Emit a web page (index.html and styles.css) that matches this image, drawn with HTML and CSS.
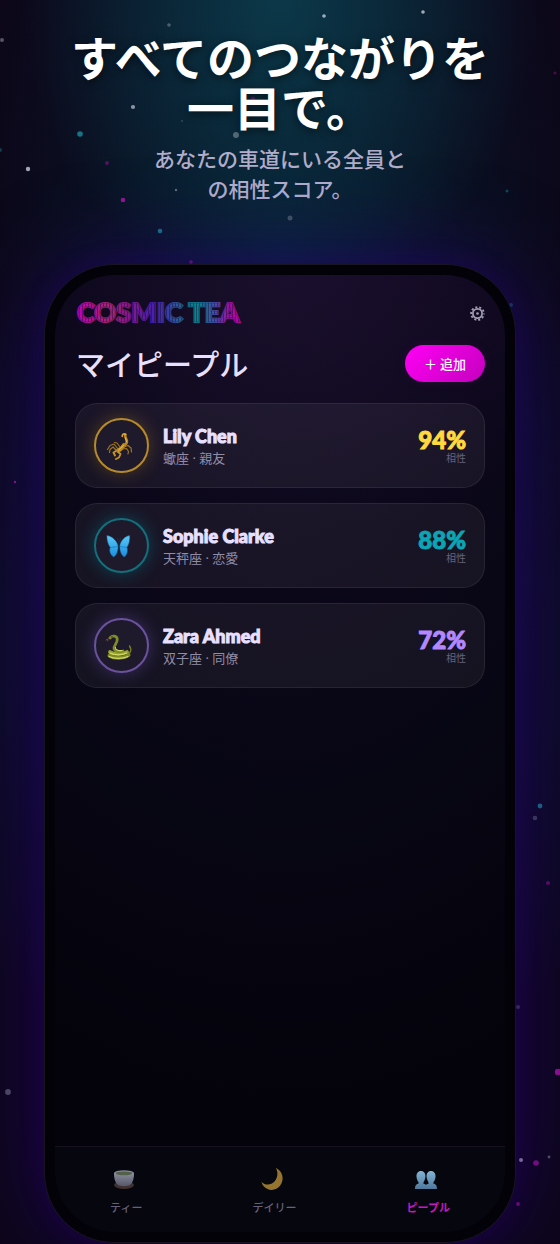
FILE: index.html
```
<!DOCTYPE html>
<html lang="ja">

<head>
    <meta charset="UTF-8" />
    <meta name="viewport" content="width=device-width, initial-scale=1.0" />
    <title>Cosmic Tea</title>
    <link rel="stylesheet" href="styles.css">
</head>

<body>

    <!-- 星空 -->
    <svg class="stars" viewBox="0 0 560 1244" preserveAspectRatio="xMidYMid slice" aria-hidden="true">
        <g fill="#dfe6f5">
            <circle cx="324" cy="16" r="1.8" opacity=".7" />
            <circle cx="423" cy="12" r="1.8" opacity=".7" />
            <circle cx="169" cy="25" r="1.8" opacity=".3" />
            <circle cx="2" cy="40" r="2" opacity=".35" />
            <circle cx="416" cy="45" r="1.5" opacity=".25" />
            <circle cx="133" cy="107" r="2.1" opacity=".6" />
            <circle cx="236" cy="135" r="3" opacity=".35" />
            <circle cx="182" cy="121" r="1" opacity=".2" />
            <circle cx="28" cy="169" r="2.2" opacity=".7" />
            <circle cx="176" cy="190" r="1.2" opacity=".4" />
            <circle cx="290" cy="218" r="2.5" opacity=".25" />
            <circle cx="535" cy="818" r="2.3" opacity=".25" />
            <circle cx="518" cy="1007" r="2" opacity=".25" />
            <circle cx="8" cy="1092" r="2.9" opacity=".32" />
            <circle cx="521" cy="1160" r="2" opacity=".65" />
            <circle cx="549" cy="1157" r="1.4" opacity=".35" />
        </g>
        <g fill="#e81ad8">
            <circle cx="555" cy="73" r="1.6" opacity=".25" />
            <circle cx="253" cy="99" r="2.4" opacity=".35" />
            <circle cx="107" cy="163" r="2" opacity=".3" />
            <circle cx="123" cy="200" r="2.3" opacity=".6" />
            <circle cx="191" cy="262" r="1.8" opacity=".5" />
            <circle cx="15" cy="482" r="1.2" opacity=".6" />
            <circle cx="548" cy="883" r="2.1" opacity=".35" />
            <circle cx="558" cy="1072" r="3.2" opacity=".6" />
            <circle cx="536" cy="1163" r="2.8" opacity=".55" />
            <circle cx="518" cy="1204" r="1.9" opacity=".5" />
        </g>
        <g fill="#1fb5c4">
            <circle cx="80" cy="134" r="2.8" opacity=".6" />
            <circle cx="0" cy="150" r="2" opacity=".3" />
            <circle cx="507" cy="191" r="1.5" opacity=".35" />
            <circle cx="160" cy="231" r="2.3" opacity=".6" />
            <circle cx="511" cy="305" r="2" opacity=".35" />
            <circle cx="540" cy="806" r="2.4" opacity=".6" />
        </g>
    </svg>

    <header class="hero">
        <h1>すべてのつながりを<br>一目で。</h1>
        <p>あなたの車道にいる全員と<br>の相性スコア。</p>
    </header>

    <div class="phone">
        <div class="screen">

            <main class="content">
                <div class="topbar">
                    <svg class="logo" viewBox="0 0 176 32" role="img" aria-label="COSMIC TEA">
                        <defs>
                            <linearGradient id="rainbow" gradientUnits="userSpaceOnUse" x1="0" y1="0" x2="168" y2="0">
                                <stop offset="0" stop-color="#bf00b5" />
                                <stop offset=".2" stop-color="#a82478" />
                                <stop offset=".32" stop-color="#8a1890" />
                                <stop offset=".48" stop-color="#4520b4" />
                                <stop offset=".6" stop-color="#2f55a0" />
                                <stop offset=".72" stop-color="#008a92" />
                                <stop offset=".84" stop-color="#4a4ab0" />
                                <stop offset=".92" stop-color="#a010a0" />
                                <stop offset="1" stop-color="#c000b0" />
                            </linearGradient>
                            <!-- 字面に入る細い縦線 -->
                            <pattern id="tube" patternUnits="userSpaceOnUse" width="3" height="32">
                                <rect x="1" width="1" height="32" fill="#140d28" opacity=".45" />
                            </pattern>
                        </defs>
                        <text class="logo-text" x="2" y="25">COSMIC TEA</text>
                        <text class="logo-lines" x="2" y="25" aria-hidden="true">COSMIC TEA</text>
                    </svg>
                    <button class="settings" type="button" aria-label="設定">
                        <svg viewBox="0 0 16 16" width="15" height="15" fill="none" stroke="currentColor">
                            <circle cx="8" cy="8" r="4.9" stroke-width="1.9" />
                            <circle cx="8" cy="8" r="6.8" stroke-width="2" stroke-dasharray="2.2 2.073" stroke-dashoffset="1.1" />
                            <circle cx="8" cy="8" r="1.4" fill="currentColor" stroke="none" />
                        </svg>
                    </button>
                </div>

                <div class="heading">
                    <h2>マイピープル</h2>
                    <button class="add" type="button">＋ 追加</button>
                </div>

                <ul class="people">
                    <li class="card">
                        <div class="avatar gold">
                            <svg viewBox="0 0 28 28" width="28" height="28" fill="none" stroke-linecap="round" stroke-linejoin="round">
                                <path d="M13 18.500C15 18 17.500 15.500 19 13" stroke="#c08a1e" stroke-width="4" />
                                <path d="M19 14C21.500 12 22.500 9.500 21.500 7.500C20.500 5.500 19.500 4 20.500 2.500" stroke="#b8851f" stroke-width="2.600" />
                                <path d="M20.500 2.500C19 1 17 2.500 17.200 4.500" stroke="#dcae3c" stroke-width="1.500" />
                                <path d="M13 17L9 12L5 13.500L2.500 17.500M12 19L8 15L5 17.500L4.500 20.500M15 15L12 11L9.500 10.500M19 15L23 13.500L26 16L26.500 20M18 17L21.500 16.500L23.500 19.500L23 22" stroke="#a0741c" stroke-width="1.200" />
                                <path d="M13 20L15.500 22L14 25.500L11 27M11 19L8.500 20.500L10 23.500" stroke="#c58f22" stroke-width="1.900" />
                                <path d="M13.500 18L18.500 13.500M21.500 10L20.500 6" stroke="#edc860" stroke-width=".9" />
                            </svg>
                        </div>
                        <div class="info">
                            <h3>Lily Chen</h3>
                            <p>蠍座 · 親友</p>
                        </div>
                        <div class="score yellow">
                            <strong>94%</strong>
                            <span>相性</span>
                        </div>
                    </li>

                    <li class="card">
                        <div class="avatar teal">
                            <svg viewBox="0 0 28 28" width="28" height="28">
                                <defs>
                                    <linearGradient id="wing" x1="0" y1="0" x2="0" y2="1">
                                        <stop offset="0" stop-color="#5bc8f5" />
                                        <stop offset="1" stop-color="#178fe0" />
                                    </linearGradient>
                                </defs>
                                <g fill="url(#wing)" stroke="#18496d" stroke-width=".5" stroke-linejoin="round">
                                    <path d="M13.200 14C12 8.500 7 4 1.800 3.500C1.800 7.500 2.500 12 5.200 15.500C3.800 18.500 5 22.500 8.500 25C11.500 24 13.200 19 13.200 14Z" />
                                    <path d="M14.600 14C15.500 8.500 20 4 24.800 3.500C25 8 24.300 12 22 15.500C23.300 18.500 22.300 22.500 19.500 25C16.500 24 14.600 19 14.600 14Z" />
                                </g>
                                <path d="M5.200 15.500L12.800 14.500M22 15.500L15 14.500" stroke="#137bc0" stroke-width=".7" />
                                <path d="M13.900 10V18M13.700 10L12 6M14.100 10L15.800 6" stroke="#20303e" stroke-width=".9" fill="none" />
                            </svg>
                        </div>
                        <div class="info">
                            <h3>Sophie Clarke</h3>
                            <p>天秤座 · 恋愛</p>
                        </div>
                        <div class="score cyan">
                            <strong>88%</strong>
                            <span>相性</span>
                        </div>
                    </li>

                    <li class="card">
                        <div class="avatar violet">
                            <svg viewBox="0 0 28 28" width="28" height="28" fill="none" stroke-linecap="round">
                                <path d="M24.500 14C26.500 17 26.500 20 23 22" stroke="#788022" stroke-width="1.400" />
                                <path d="M4.500 23.500C9 26.500 19 26.500 23.500 23" stroke="#7d8924" stroke-width="4" />
                                <path d="M5 20C9 22.500 18 22.500 22 20" stroke="#98a52c" stroke-width="3.800" />
                                <path d="M5 6C7.500 3 12.500 3.500 12.200 8C12 12 8 14 9 17C10 19.500 15 20 18 19" stroke="#7f8b28" stroke-width="2.800" />
                                <path d="M4 24.500C9 27 18 27 23 24.500M5 21C9 23.500 17 23.500 21.500 21M10.500 15.500C10 17.500 13 19 17 18.500" stroke="#d3da68" stroke-width="1.100" />
                                <path d="M4 6.500L1 8M2.400 7.400L2.800 9" stroke="#8d4a44" stroke-width=".8" />
                                <circle cx="7" cy="5" r=".7" fill="#22260b" />
                            </svg>
                        </div>
                        <div class="info">
                            <h3>Zara Ahmed</h3>
                            <p>双子座 · 同僚</p>
                        </div>
                        <div class="score purple">
                            <strong>72%</strong>
                            <span>相性</span>
                        </div>
                    </li>
                </ul>
            </main>

            <nav class="tabs">
                <a href="#tea">
                    <svg viewBox="0 0 22 24" width="22" height="24">
                        <defs>
                            <linearGradient id="cup" x1="0" y1="0" x2="0" y2="1">
                                <stop offset="0" stop-color="#8b8d9d" />
                                <stop offset="1" stop-color="#55576b" />
                            </linearGradient>
                        </defs>
                        <ellipse cx="11" cy="18" rx="10" ry="4" fill="#40302e" />
                        <path d="M1 6H21C21 10 20.500 15 17 18C15 19.500 7 19.500 5 18C1.500 15 1 10 1 6Z" fill="url(#cup)" />
                        <ellipse cx="11" cy="6" rx="10" ry="2.800" fill="#858797" />
                        <ellipse cx="11" cy="6.300" rx="8.200" ry="1.900" fill="#53604a" />
                    </svg>
                    <span>ティー</span>
                </a>
                <a href="#daily">
                    <svg viewBox="0 0 22 24" width="22" height="24">
                        <path d="M14.800 .8C20 3.500 23 9 21 15C19 21.500 12 24.500 6.500 22C3.500 20.700 1.200 18 .5 15C4 18.500 10 18.500 13.500 14.500C17 10.500 17.200 5 14.800 .8Z" fill="#94742f" />
                    </svg>
                    <span>デイリー</span>
                </a>
                <a href="#people" class="active">
                    <svg viewBox="0 0 22 24" width="22" height="24">
                        <defs>
                            <linearGradient id="bust" x1="0" y1="0" x2="0" y2="1">
                                <stop offset="0" stop-color="#83b3d4" />
                                <stop offset="1" stop-color="#4d789c" />
                            </linearGradient>
                        </defs>
                        <g fill="url(#bust)">
                            <path d="M6 4C9 4 10.700 6.500 10.400 10C10.200 13 8.500 14.500 8.300 16.500L11 17.700V22H0C0 18 1.500 17 3.800 16.500C3.500 14.500 1.700 13 1.500 10C1.200 6.500 3 4 6 4Z" />
                            <path d="M16 4C13 4 11.300 6.500 11.600 10C11.800 13 13.500 14.500 13.700 16.500L11 17.700V22H22C22 18 20.500 17 18.200 16.500C18.500 14.500 20.300 13 20.500 10C20.800 6.500 19 4 16 4Z" />
                        </g>
                    </svg>
                    <span>ピープル</span>
                </a>
            </nav>

        </div>
    </div>

</body>

</html>
```

FILE: styles.css
```
* {
    box-sizing: border-box;
    margin: 0;
    padding: 0;
}

body {
    position: relative;
    display: flex;
    flex-direction: column;
    min-height: 100vh;
    overflow-x: hidden;
    padding: 31px 44px 1px;
    font-family: "Noto Sans CJK JP", sans-serif;
    color: #e8e0ff;
    background:
        radial-gradient(ellipse 46% 24% at 50% 0, rgba(12, 68, 84, .75), transparent),
        radial-gradient(ellipse 56% 52% at 50% 20%, rgba(4, 45, 62, .6), transparent),
        radial-gradient(ellipse 80% 35% at 50% 52%, rgba(10, 24, 62, .8), transparent),
        #0c0618;
}

/* 背景の星 */
.stars {
    position: absolute;
    inset: 0;
    width: 100%;
    height: 100%;
}

/* キャッチコピー */
.hero {
    position: relative;
    padding-bottom: 61px;
    text-align: center;
}

.hero h1 {
    margin: 0 -20px;
    font-size: 47px;
    line-height: 50px;
    font-weight: 700;
    color: #fff;
    text-shadow: 0 2px 10px rgba(0, 0, 0, .6);
}

.hero p {
    margin-top: 12px;
    font-size: 21px;
    line-height: 30px;
    font-weight: 500;
    color: #b1adcb;
}

/* 端末フレーム */
.phone {
    position: relative;
    flex: 1;
    display: flex;
    padding: 10px;
    border: 1px solid #18151f;
    border-radius: 70px;
    background: #030208;
    box-shadow: 0 0 24px rgba(38, 0, 100, .3), 0 0 90px rgba(48, 0, 140, .55);
}

.screen {
    flex: 1;
    display: flex;
    flex-direction: column;
    overflow: hidden;
    border-radius: 60px;
    background:
        radial-gradient(ellipse 80% 26% at 60% 0, rgba(52, 22, 78, .25), transparent),
        radial-gradient(ellipse 130% 88% at 50% 0, #120d22 0%, #0b0719 38%, #070613 65%, #04020a 100%);
}

.content {
    flex: 1;
    padding: 20px;
}

.topbar,
.heading {
    display: flex;
    align-items: center;
    justify-content: space-between;
}

.topbar {
    height: 36px;
}

.logo {
    width: 176px;
    height: 32px;
}

.logo-text,
.logo-lines {
    font-family: Lato, sans-serif;
    font-size: 27px;
    font-weight: 900;
    stroke-width: 2px;
}

.logo-text {
    fill: url(#rainbow);
    stroke: url(#rainbow);
}

.logo-lines {
    fill: url(#tube);
    stroke: #140d28;
    stroke-width: 1px;
    stroke-opacity: .3;
}

.settings {
    display: flex;
    border: 0;
    background: none;
    color: #a09bb2;
}

.heading {
    margin-top: 14px;
    height: 37px;
}

.heading h2 {
    padding-left: 1px;
    font-size: 29px;
    line-height: 37px;
    font-weight: 500;
}

.add {
    height: 37px;
    padding: 0 19px;
    border: 0;
    border-radius: 19px;
    font-family: inherit;
    font-size: 13px;
    font-weight: 500;
    color: #fff;
    background: linear-gradient(135deg, #ff00f5, #c400bd);
    box-shadow: 0 0 12px rgba(255, 0, 245, .08);
}

/* 相性リスト */
.people {
    display: flex;
    flex-direction: column;
    gap: 15px;
    margin-top: 21px;
    list-style: none;
}

.card {
    display: flex;
    align-items: center;
    gap: 14px;
    padding: 14px 18px;
    border: 1px solid rgba(255, 255, 255, .07);
    border-radius: 22px;
    background: rgba(255, 255, 255, .055);
}

.avatar {
    display: grid;
    place-items: center;
    width: 55px;
    height: 55px;
    border: 2px solid;
    border-radius: 50%;
    background: #1e1a2c;
}

.avatar svg {
    margin-right: 6px;
}

.gold {
    border-color: #b58a2c;
    box-shadow: 0 0 18px rgba(220, 160, 30, .28);
}

.teal {
    border-color: #156e7a;
    box-shadow: 0 0 18px rgba(0, 170, 180, .32);
}

.violet {
    border-color: #6a529c;
    box-shadow: 0 0 18px rgba(140, 105, 230, .32);
}

.info {
    flex: 1;
}

.info h3,
.score strong {
    font-family: Lato, sans-serif;
    font-weight: 900;
    -webkit-text-stroke: 1px currentColor;
}

.info h3 {
    font-size: 18px;
    line-height: 24px;
}

.info p {
    font-family: "Noto Sans", "Noto Sans CJK JP", sans-serif;
    font-size: 13px;
    line-height: 20px;
    color: #918ca6;
}

.score {
    display: flex;
    flex-direction: column;
    align-items: flex-end;
}

.score strong {
    font-size: 24px;
    line-height: 24px;
}

.score span {
    font-size: 10px;
    line-height: 12px;
    color: #686379;
}

.yellow {
    color: #ffd93d;
}

.cyan {
    color: #0ba5b3;
}

.purple {
    color: #b388ff;
}

/* 下部タブ */
.tabs {
    display: flex;
    justify-content: space-around;
    height: 86px;
    padding-top: 20px;
    border-top: 1px solid #15121e;
    background: #06060f;
}

.tabs a {
    display: flex;
    flex-direction: column;
    align-items: center;
    gap: 8px;
    font-size: 11px;
    line-height: 16px;
    font-weight: 500;
    color: #65617a;
    text-decoration: none;
}

.tabs svg {
    margin-right: 5px;
}

.tabs .active {
    font-weight: 700;
    color: #c518bd;
}
```
